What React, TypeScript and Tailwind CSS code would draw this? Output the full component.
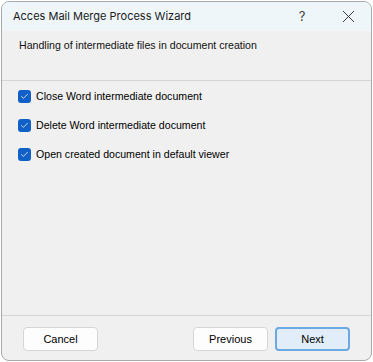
import { Check, X } from 'lucide-react';

const options = [
  'Close Word intermediate document',
  'Delete Word intermediate document',
  'Open created document in default viewer',
];

function CheckBox({ label }: { label: string }) {
  return (
    <label className="flex items-center gap-[5px] h-[13px]">
      <span className="flex items-center justify-center w-[13px] h-[13px] rounded-[3px] bg-[#1160c8]">
        <Check className="w-[9px] h-[9px] text-white" strokeWidth={2} />
      </span>
      <span className="text-[10.6px] leading-none text-black">{label}</span>
    </label>
  );
}

export default function App() {
  return (
    <div className="w-[373px] h-[362px] bg-white p-px font-['Liberation_Sans',Arial,sans-serif]">
      <div className="w-[371px] h-[360px] flex flex-col border border-[#a9a9a9] rounded-[8px] overflow-hidden bg-[#f0f0f0]">
        {/* title bar */}
        <div className="h-[29px] shrink-0 flex items-center bg-[#eef6f9] pl-[11px]">
          <span className="text-[11px] text-[#1a1a1a] font-['Inter',sans-serif]">Acces Mail Merge Process Wizard</span>
          <span className="ml-auto w-[46px] text-center text-[13px] text-[#444] font-['Inter',sans-serif]">?</span>
          <div className="w-[46px] flex justify-center">
            <X className="w-[21px] h-[21px] text-[#222]" strokeWidth={1} />
          </div>
        </div>

        {/* header */}
        <div className="h-[50px] shrink-0 border-b border-[#d5d5d5] pl-[17px] pt-[8px]">
          <p className="text-[10.6px] text-[#111] leading-[13px]">Handling of intermediate files in document creation</p>
        </div>

        {/* options */}
        <div className="flex-1 flex flex-col gap-[16px] pl-[16px] pt-[9px]">
          {options.map((o) => (
            <CheckBox key={o} label={o} />
          ))}
        </div>

        {/* footer */}
        <div className="h-[45px] shrink-0 border-t border-[#d5d5d5] flex items-start pt-[11px] pl-[21px] pr-[21px]">
          <button className="w-[75px] h-[24px] rounded-[4px] border border-[#d6d6d6] bg-[#fdfdfd] text-[11px] text-black">
            Cancel
          </button>
          <button className="ml-auto w-[75px] h-[24px] rounded-[4px] border border-[#d6d6d6] bg-[#fdfdfd] text-[11px] text-black">
            Previous
          </button>
          <button className="ml-[7px] w-[75px] h-[24px] rounded-[4px] border-2 border-[#6aa9e2] bg-[#e1eefa] text-[11px] text-black">
            Next
          </button>
        </div>
      </div>
    </div>
  );
}
